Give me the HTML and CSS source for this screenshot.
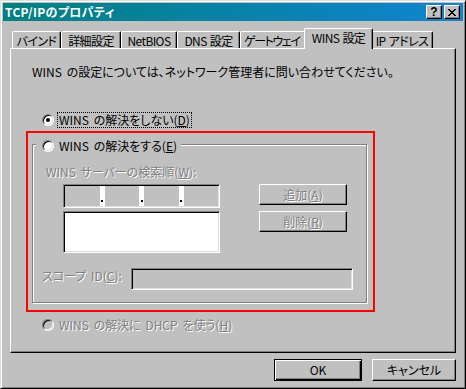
FILE: index.html
```html
<!DOCTYPE html>
<html lang="ja">
<head>
<meta charset="utf-8">
<title>TCP/IPのプロパティ</title>
<link rel="stylesheet" href="styles.css">
</head>
<body>
<div class="window">
  <div class="titlebar">
    <span class="title">TCP/IPのプロパティ</span>
    <div class="caption-btns">
      <div class="cbtn help">?</div>
      <div class="cbtn close">
        <svg width="8" height="7" viewBox="0 0 8 7" shape-rendering="crispEdges"><path d="M0 0h2v1h-2zM6 0h2v1h-2zM1 1h2v1h-2zM5 1h2v1h-2zM2 2h4v1h-4zM3 3h2v1h-2zM2 4h4v1h-4zM1 5h2v1h-2zM5 5h2v1h-2zM0 6h2v1h-2zM6 6h2v1h-2z" fill="#000"/></svg>
      </div>
    </div>
  </div>
  <div class="body">
    <div class="tabs">
      <div class="tab t-bind">バインド</div>
      <div class="tab t-detail">詳細設定</div>
      <div class="tab t-netbios">NetBIOS</div>
      <div class="tab t-dns">DNS 設定</div>
      <div class="tab t-gw">ゲートウェイ</div>
      <div class="tab t-wins active">WINS 設定</div>
      <div class="tab t-ip">IP アドレス</div>
    </div>
    <div class="panel">
      <p class="desc">WINS の設定については、ネットワーク管理者に問い合わせてください。</p>
      <div class="radio-row r1">
        <span class="radio checked"></span>
        <span class="rlabel focus">WINS の解決をしない(<u>D</u>)</span>
      </div>
      <div class="group">
        <div class="legend">
          <span class="radio"></span>
          <span class="rlabel">WINS の解決をする(<u>E</u>)</span>
        </div>
        <div class="glabel dis">WINS サーバーの検索順(<u>W</u>):</div>
        <div class="server-row">
          <div class="server-col">
            <div class="ipfield sunken">
              <span class="seg"></span><span class="dot"></span>
              <span class="seg"></span><span class="dot"></span>
              <span class="seg"></span><span class="dot"></span>
              <span class="seg"></span>
            </div>
            <div class="listbox sunken"></div>
          </div>
          <div class="btn-col">
            <div class="btn raised dis">追加(<u>A</u>)</div>
            <div class="btn raised dis">削除(<u>R</u>)</div>
          </div>
        </div>
        <div class="scope-row">
          <span class="scope-label dis">スコープ ID(<u>C</u>):</span>
          <div class="scope-input sunken"></div>
        </div>
      </div>
      <div class="radio-row r3">
        <span class="radio disabled"></span>
        <span class="rlabel dis">WINS の解決に DHCP を使う(<u>H</u>)</span>
      </div>
      <div class="highlight"></div>
    </div>
    <div class="footer">
      <div class="btn ok">OK</div>
      <div class="btn cancel raised">キャンセル</div>
    </div>
  </div>
</div>
</body>
</html>
```

FILE: styles.css
```css
* { box-sizing: border-box; }

body {
  margin: 0;
  background: #c0c0c0;
  font-family: "Noto Sans CJK JP", "Liberation Sans", sans-serif;
  font-size: 12px;
  line-height: 16px;
  color: #000;
  font-feature-settings: "palt";
  word-spacing: 2px;
}

u { text-decoration: underline; text-underline-offset: 1px; }

.window {
  width: 466px;
  height: 389px;
  background: #c0c0c0;
  border: 1px solid;
  border-color: #dfdfdf #000 #000 #dfdfdf;
  box-shadow: inset 1px 1px #fff, inset -1px -1px #808080;
  padding: 2px;
  display: flex;
  flex-direction: column;
}

.titlebar {
  height: 18px;
  flex: none;
  display: flex;
  align-items: center;
  justify-content: space-between;
  background: linear-gradient(90deg, #008080, #1084d0);
  padding: 0 3px 0 2px;
}

.title {
  color: #fff;
  font-weight: bold;
  line-height: 18px;
  white-space: nowrap;
  letter-spacing: 0.3px;
}

.caption-btns { display: flex; gap: 2px; }

.cbtn {
  width: 16px;
  height: 14px;
  background: #c0c0c0;
  border: 1px solid;
  border-color: #fff #000 #000 #fff;
  box-shadow: inset -1px -1px #808080;
  display: flex;
  align-items: center;
  justify-content: center;
  font-family: "Liberation Sans", sans-serif;
  font-weight: bold;
  font-size: 12px;
  line-height: 12px;
}

.body {
  flex: 1;
  display: flex;
  flex-direction: column;
  padding: 7px 7px 0 7px;
}

.tabs {
  display: flex;
  align-items: flex-end;
  height: 20px;
  margin-left: 2px;
  position: relative;
  z-index: 1;
}

.tab {
  flex: none;
  height: 17px;
  background: #c0c0c0;
  border: 1px solid;
  border-bottom: none;
  border-color: #fff #000 #000 #fff;
  border-radius: 2px 2px 0 0;
  box-shadow: inset -1px 0 #808080;
  display: flex;
  align-items: center;
  justify-content: center;
  white-space: nowrap;
  line-height: 15px;
  letter-spacing: -0.6px;
  word-spacing: 1px;
}

.t-bind { width: 49px; }
.t-detail { width: 60px; }
.t-netbios { width: 56px; }
.t-dns { width: 63px; }
.t-gw { width: 66px; letter-spacing: -1.4px; justify-content: flex-start; padding-left: 3px; }
.t-wins { width: 69px; }
.t-ip { width: 62px; }

.tab.active {
  height: 21px;
  margin: 0 -2px -1px;
  padding-bottom: 3px;
  position: relative;
  z-index: 2;
}

.panel {
  flex: none;
  width: 446px;
  height: 305px;
  border: 1px solid;
  border-color: #fff #000 #000 #fff;
  box-shadow: inset -1px -1px #808080;
  position: relative;
}

.desc {
  margin: 15px 0 0 21px;
  white-space: nowrap;
}

.radio-row {
  display: flex;
  align-items: center;
  height: 16px;
}

.r1 { margin: 32px 0 0 31px; }
.r3 { margin: 14px 0 0 31px; }

.radio {
  flex: none;
  width: 12px;
  height: 12px;
  border-radius: 50%;
  border: 1px solid;
  border-color: #808080 #fff #fff #808080;
  background: #fff;
  box-shadow: inset 1px 1px #000, inset -1px -1px #dfdfdf;
  position: relative;
}

.radio.checked::after {
  content: "";
  position: absolute;
  left: 3px;
  top: 3px;
  width: 4px;
  height: 4px;
  border-radius: 50%;
  background: #000;
}

.radio.disabled { background: #c0c0c0; }

.rlabel {
  margin-left: 3px;
  padding: 0 1px;
  border: 1px dotted transparent;
  line-height: 14px;
  white-space: nowrap;
}

.rlabel.focus { border-color: #000; }

.dis {
  color: #808080;
  text-shadow: 1px 1px 0 #fff;
}

.group {
  margin: 16px 0 0 21px;
  width: 335px;
  height: 159px;
  border: 1px solid #808080;
  box-shadow: inset 1px 1px #fff, 1px 1px #fff;
  position: relative;
}

.legend {
  position: absolute;
  left: 3px;
  top: -7px;
  height: 16px;
  display: flex;
  align-items: center;
  padding: 0 2px 0 6px;
  background: #c0c0c0;
}

.glabel {
  margin: 19px 0 0 13px;
  white-space: nowrap;
}

.server-row {
  display: flex;
  gap: 39px;
  margin: 4px 0 0 30px;
}

.server-col {
  width: 157px;
  display: flex;
  flex-direction: column;
  gap: 3px;
}

.sunken {
  border: 1px solid;
  border-color: #808080 #fff #fff #808080;
  box-shadow: inset 1px 1px #000, inset -1px -1px #dfdfdf;
  padding: 1px;
}

.ipfield {
  height: 24px;
  display: flex;
  background: #fff;
}

.seg { flex: 1; background: #c0c0c0; }

.dot {
  width: 5px;
  display: flex;
  align-items: flex-end;
  justify-content: center;
  padding-bottom: 4px;
}

.dot::after {
  content: "";
  width: 2px;
  height: 2px;
  background: #000;
}

.listbox {
  height: 42px;
  background: #fff;
}

.btn-col {
  display: flex;
  flex-direction: column;
  gap: 6px;
}

.btn {
  width: 88px;
  height: 21px;
  display: flex;
  align-items: center;
  justify-content: center;
  white-space: nowrap;
  line-height: 14px;
}

.raised {
  border: 1px solid;
  border-color: #fff #000 #000 #fff;
  box-shadow: inset -1px -1px #808080;
}

.scope-row {
  display: flex;
  align-items: flex-start;
  margin: 15px 0 0 9px;
}

.scope-label {
  width: 89px;
  line-height: 14px;
  margin-top: 1px;
  white-space: nowrap;
}

.scope-input {
  width: 222px;
  height: 22px;
  background: #c0c0c0;
}

.highlight {
  position: absolute;
  left: 15px;
  top: 82px;
  width: 349px;
  height: 181px;
  border: 2px solid #f00;
  pointer-events: none;
}

.footer {
  display: flex;
  justify-content: flex-end;
  gap: 10px;
  width: 446px;
  margin-top: 6px;
}

.btn.ok {
  width: 88px;
  height: 22px;
  border: 1px solid #000;
  box-shadow: inset 1px 1px #fff, inset -1px -1px #000, inset -2px -2px #808080;
}

.btn.cancel {
  width: 84px;
  height: 22px;
}
```
